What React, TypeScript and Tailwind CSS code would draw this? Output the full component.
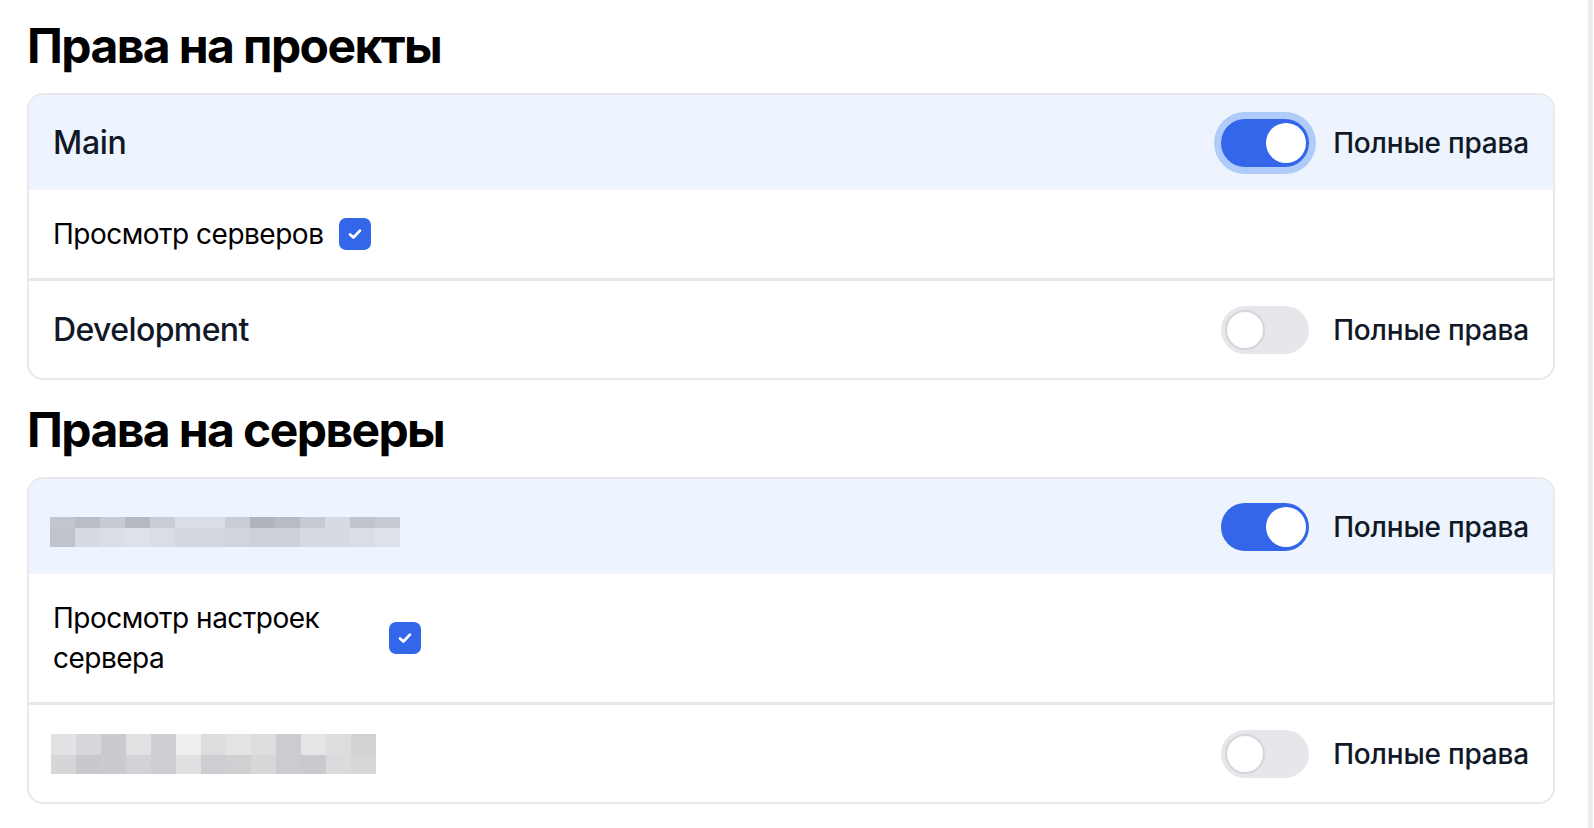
import React from "react";

const mosaicA: string[][] = [
  ["#c2c6ce", "#b9bdc6", "#c6cad2", "#b5b9c2", "#c9cdd5", "#d9dde5", "#d9dde5", "#c9cdd5", "#b0b4bd", "#b7bbc4", "#c6cad2", "#d6dae2", "#c0c4cc", "#c6cad2"],
  ["#bfc3cb", "#d6dae2", "#dadee6", "#dde1e9", "#d9dde5", "#d3d7df", "#d3d7df", "#d0d4dc", "#cdd1d9", "#cdd1d9", "#d6dae2", "#d6dae2", "#d9dde5", "#dde1e9"],
];
const mosaicB: string[][] = [
  ["#e1e2e4", "#d6d7da", "#cacbce", "#e0e1e3", "#cdced1", "#efefef", "#dcdddf", "#e2e3e5", "#dcdddf", "#cbcccf", "#e4e5e7", "#dcdddf", "#d1d2d4"],
  ["#d5d6d8", "#c8c9cc", "#cacbce", "#d2d3d6", "#cdced1", "#dfe0e2", "#cdced1", "#ced0d2", "#d6d7d9", "#cbcccf", "#c9cacd", "#dadbdd", "#d6d7d9"],
];

function Mosaic({ rows, heights, className }: { rows: string[][]; heights: string[]; className?: string }) {
  return (
    <div className={"flex flex-col " + (className ?? "")}>
      {rows.map((r, i) => (
        <div key={i} className={"flex " + heights[i]}>
          {r.map((c, j) => (
            <div key={j} className="w-[25px] h-full" style={{ backgroundColor: c }} />
          ))}
        </div>
      ))}
    </div>
  );
}

function Toggle({ on, focus }: { on: boolean; focus?: boolean }) {
  return (
    <div
      className={
        "relative w-[88px] h-[48px] rounded-full shrink-0 " +
        (on ? "bg-[#3366e8] " : "bg-[#e5e7eb] ") +
        (focus ? "ring-[7px] ring-[#aecbfa]" : "")
      }
    >
      <div
        className={
          "absolute top-[4px] w-[40px] h-[40px] rounded-full bg-white " +
          (on ? "left-[45px]" : "left-[4px] border-2 border-[#d4d5da]")
        }
      />
    </div>
  );
}

function FullRights({ on, focus }: { on: boolean; focus?: boolean }) {
  return (
    <div className="flex items-center gap-[24px]">
      <Toggle on={on} focus={focus} />
      <span className="text-[28px] leading-[40px] font-medium text-[#111827] tracking-[-0.2px]">Полные права</span>
    </div>
  );
}

function Check() {
  return (
    <div className="w-[32px] h-[32px] rounded-[7px] bg-[#3366e8] flex items-center justify-center shrink-0">
      <svg width="18" height="18" viewBox="0 0 16 16" fill="none">
        <path d="M3.6 8.4 L6.6 11.1 L12.4 5" stroke="white" strokeWidth="2.4" strokeLinecap="round" strokeLinejoin="round" />
      </svg>
    </div>
  );
}

function Divider() {
  return <div className="h-[3px] bg-[#e5e7eb]" />;
}

export default function App() {
  return (
    <div className="flex min-h-screen bg-white font-['Inter','Noto_Sans',sans-serif]">
      <div className="flex-1 pl-[27px] pr-[33px]">
        <h2 className="pt-[14px] mb-[15px] text-[48px] leading-[64px] font-bold text-black tracking-[-1.6px]">
          Права на проекты
        </h2>
        <div className="rounded-[16px] border-2 border-[#e8e9ed] overflow-hidden">
          <div className="h-[95px] bg-[#edf4fe] flex items-center justify-between pl-[24px] pr-[24px]">
            <span className="text-[32px] leading-[48px] font-medium text-[#111827] tracking-[-0.3px]">Main</span>
            <FullRights on focus />
          </div>
          <div className="py-[24px] pl-[24px] flex items-center gap-[16px]">
            <span className="max-w-[320px] text-[28px] leading-[40px] text-black tracking-[-0.5px]">Просмотр серверов</span>
            <Check />
          </div>
          <Divider />
          <div className="h-[97px] flex items-center justify-between pl-[24px] pr-[24px]">
            <span className="text-[32px] leading-[48px] font-medium text-[#111827] tracking-[-0.6px]">Development</span>
            <FullRights on={false} />
          </div>
        </div>

        <h2 className="mt-[18px] mb-[15px] text-[48px] leading-[64px] font-bold text-black tracking-[-1.6px]">
          Права на серверы
        </h2>
        <div className="rounded-[16px] border-2 border-[#e8e9ed] overflow-hidden">
          <div className="h-[95px] bg-[#edf4fe] flex items-center justify-between pl-[21px] pr-[24px]">
            <Mosaic rows={mosaicA} heights={["h-[11px]", "h-[19px]"]} className="mt-[10px]" />
            <FullRights on />
          </div>
          <div className="py-[24px] pl-[24px] flex items-center gap-[16px]">
            <span className="max-w-[320px] text-[28px] leading-[40px] text-black tracking-[-0.5px]">Просмотр настроек сервера</span>
            <Check />
          </div>
          <Divider />
          <div className="h-[97px] flex items-center justify-between pl-[22px] pr-[24px]">
            <Mosaic rows={mosaicB} heights={["h-[21px]", "h-[19px]"]} />
            <FullRights on={false} />
          </div>
        </div>
      </div>
      <div className="w-[6px] flex">
        <div className="w-[5px] bg-[#ececec]" />
      </div>
    </div>
  );
}
